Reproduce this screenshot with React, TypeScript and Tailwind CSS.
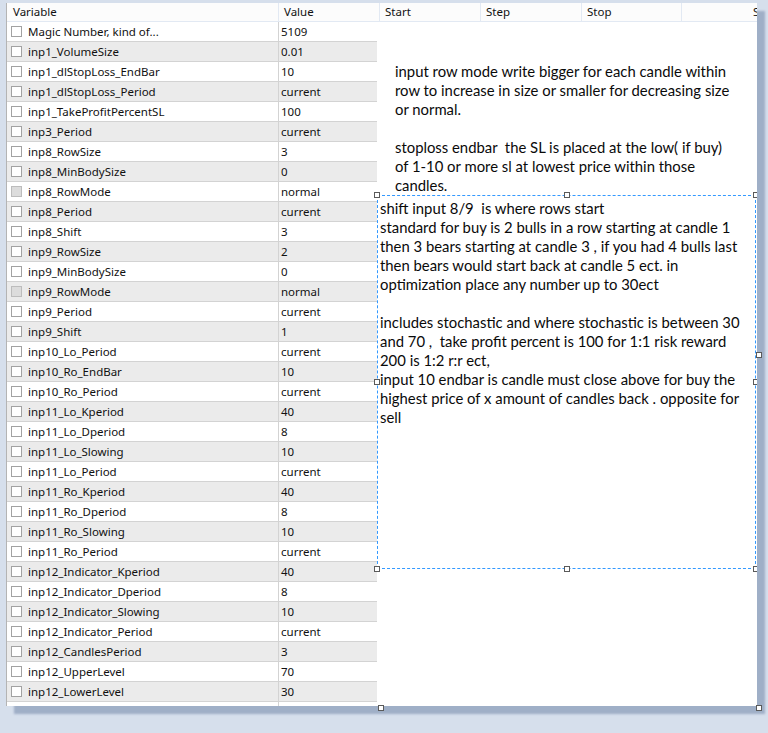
import React from "react";

type Row = { name: string; value: string; disabled?: boolean };

const rows: Row[] = [
  { name: "Magic Number, kind of...", value: "5109" },
  { name: "inp1_VolumeSize", value: "0.01" },
  { name: "inp1_dlStopLoss_EndBar", value: "10" },
  { name: "inp1_dlStopLoss_Period", value: "current" },
  { name: "inp1_TakeProfitPercentSL", value: "100" },
  { name: "inp3_Period", value: "current" },
  { name: "inp8_RowSize", value: "3" },
  { name: "inp8_MinBodySize", value: "0" },
  { name: "inp8_RowMode", value: "normal", disabled: true },
  { name: "inp8_Period", value: "current" },
  { name: "inp8_Shift", value: "3" },
  { name: "inp9_RowSize", value: "2" },
  { name: "inp9_MinBodySize", value: "0" },
  { name: "inp9_RowMode", value: "normal", disabled: true },
  { name: "inp9_Period", value: "current" },
  { name: "inp9_Shift", value: "1" },
  { name: "inp10_Lo_Period", value: "current" },
  { name: "inp10_Ro_EndBar", value: "10" },
  { name: "inp10_Ro_Period", value: "current" },
  { name: "inp11_Lo_Kperiod", value: "40" },
  { name: "inp11_Lo_Dperiod", value: "8" },
  { name: "inp11_Lo_Slowing", value: "10" },
  { name: "inp11_Lo_Period", value: "current" },
  { name: "inp11_Ro_Kperiod", value: "40" },
  { name: "inp11_Ro_Dperiod", value: "8" },
  { name: "inp11_Ro_Slowing", value: "10" },
  { name: "inp11_Ro_Period", value: "current" },
  { name: "inp12_Indicator_Kperiod", value: "40" },
  { name: "inp12_Indicator_Dperiod", value: "8" },
  { name: "inp12_Indicator_Slowing", value: "10" },
  { name: "inp12_Indicator_Period", value: "current" },
  { name: "inp12_CandlesPeriod", value: "3" },
  { name: "inp12_UpperLevel", value: "70" },
  { name: "inp12_LowerLevel", value: "30" },
  { name: "", value: "" },
];

const para1 = [
  "input row mode write bigger for each candle within",
  "row to increase in size or smaller for decreasing size",
  "or normal.",
  "",
  "stoploss endbar  the SL is placed at the low( if buy)",
  "of 1-10 or more sl at lowest price within those",
  "candles.",
];

const para2 = [
  "shift input 8/9  is where rows start",
  "standard for buy is 2 bulls in a row starting at candle 1",
  "then 3 bears starting at candle 3 , if you had 4 bulls last",
  "then bears would start back at candle 5 ect. in",
  "optimization place any number up to 30ect",
  "",
  "includes stochastic and where stochastic is between 30",
  "and 70 ,  take profit percent is 100 for 1:1 risk reward",
  "200 is 1:2 r:r ect,",
  "input 10 endbar is candle must close above for buy the",
  "highest price of x amount of candles back . opposite for",
  "sell",
];

function Handle({ className }: { className: string }) {
  return (
    <div
      className={
        "absolute w-[6px] h-[6px] border border-[#5a5a5a] bg-white " + className
      }
    />
  );
}

export default function App() {
  return (
    <div className="relative w-[768px] h-[733px] overflow-hidden bg-[#d6dfec] pl-[6px] pt-[3px] font-['Noto_Sans',sans-serif]">
      <div className="w-[751px] h-[703px] bg-white border-l border-[#b4b4b4] shadow-[8px_8px_2px_rgba(145,162,190,0.8)] flex flex-col overflow-hidden">
        {/* header */}
        <div className="flex h-[19px] shrink-0 border-b border-[#e2e9f3] bg-[#fcfcfc] text-[11.5px] leading-[18px] text-[#111]">
          <div className="w-[272px] shrink-0 border-r border-[#e2e9f3] pl-[6px]">Variable</div>
          <div className="w-[101px] shrink-0 border-r border-[#e2e9f3] pl-[5px]">Value</div>
          <div className="w-[101px] shrink-0 border-r border-[#e2e9f3] pl-[5px]">Start</div>
          <div className="w-[101px] shrink-0 border-r border-[#e2e9f3] pl-[5px]">Step</div>
          <div className="w-[100px] shrink-0 border-r border-[#e2e9f3] pl-[5px]">Stop</div>
          <div className="flex-1 overflow-hidden whitespace-nowrap pl-[71px]">S</div>
        </div>
        {/* body */}
        <div className="flex flex-1 overflow-hidden">
          <div className="w-[370px] shrink-0 flex flex-col text-[11.5px] text-[#111]">
            {rows.map((r, i) => (
              <div
                key={i}
                className={
                  "flex h-[20px] shrink-0 border-b border-[#d3d3d3] " +
                  (i % 2 === 1 ? "bg-[#ebebeb]" : "bg-white")
                }
              >
                <div className="w-[272px] shrink-0 border-r border-[#d3d3d3] flex items-center pl-[4px]">
                  {r.name !== "" && (
                    <div
                      className={
                        "w-[11px] h-[11px] shrink-0 border " +
                        (r.disabled
                          ? "border-[#bcbcbc] bg-[#dcdcdc]"
                          : "border-[#a2a2a2] bg-white")
                      }
                    />
                  )}
                  <span className="ml-[6px] whitespace-nowrap">{r.name}</span>
                </div>
                <div className="flex-1 flex items-center pl-[2px] whitespace-nowrap">
                  {r.value}
                </div>
              </div>
            ))}
          </div>
          <div className="flex-1 bg-white text-[14.85px] leading-[19px] text-[#0a0a0a] font-['Lato',sans-serif]">
            <div className="pt-[40px] pl-[18px]">
              {para1.map((l, i) => (
                <div key={i} className="h-[19px] whitespace-pre">
                  {l}
                </div>
              ))}
            </div>
            <div className="relative w-[379px] h-[374px] border border-dashed border-[#3399ff] pl-[2px] pt-[3px]">
              {para2.map((l, i) => (
                <div key={i} className="h-[19px] whitespace-pre">
                  {l}
                </div>
              ))}
              <Handle className="-left-[4px] -top-[4px]" />
              <Handle className="left-[186px] -top-[4px]" />
              <Handle className="-right-[4px] -top-[4px]" />
              <Handle className="-left-[4px] top-[183px]" />
              <Handle className="-right-[4px] top-[183px]" />
              <Handle className="-left-[4px] -bottom-[4px]" />
              <Handle className="left-[186px] -bottom-[4px]" />
              <Handle className="-right-[4px] -bottom-[4px]" />
            </div>
          </div>
        </div>
      </div>
      <Handle className="left-[756px] top-[352px]" />
      <Handle className="left-[378px] top-[705px]" />
      <Handle className="left-[756px] top-[705px]" />
    </div>
  );
}
